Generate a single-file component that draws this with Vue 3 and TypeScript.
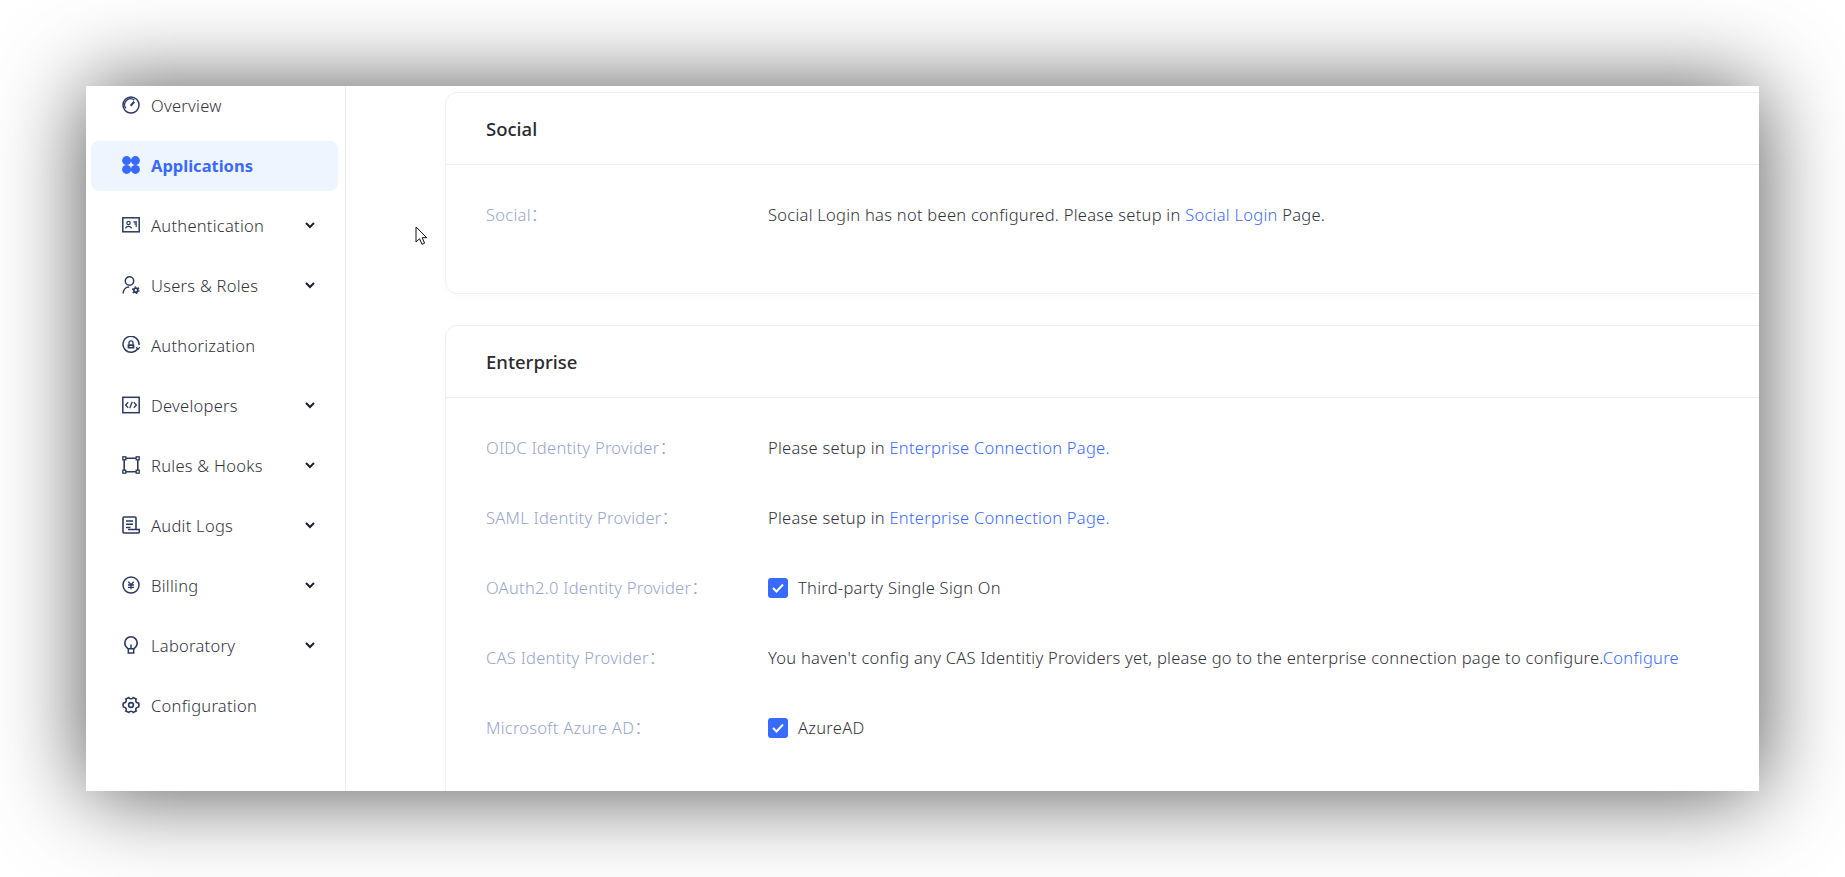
<template>
  <div class="page">
    <div class="window">
      <aside class="sidebar">
        <nav class="nav">
          <div v-for="item in menu" :key="item.label" class="nav-item" :class="{ active: item.active }">
            <svg class="nav-icon" viewBox="0 0 18 18" fill="none" stroke="currentColor" stroke-width="1.5" v-html="item.icon"></svg>
            <span class="nav-label">{{ item.label }}</span>
            <svg v-if="item.sub" class="chevron" viewBox="0 0 10 7" fill="none" stroke="currentColor" stroke-width="2"><path d="M1 1l4 4 4-4" /></svg>
          </div>
        </nav>
      </aside>
      <main class="main">
        <section class="card social">
          <header class="card-title">Social</header>
          <div class="rows">
            <div class="row">
              <span class="label">Social：</span>
              <span class="value">Social Login has not been configured. Please setup in <a class="link">Social Login</a> Page.</span>
            </div>
          </div>
        </section>
        <section class="card enterprise">
          <header class="card-title">Enterprise</header>
          <div class="rows">
            <div v-for="row in enterprise" :key="row.label" class="row">
              <span class="label">{{ row.label }}：</span>
              <span v-if="row.check" class="check">
                <span class="box"><svg viewBox="0 0 20 20" fill="none" stroke="#fff" stroke-width="2"><path d="M5 10l3.500 3.500L15 6.500" /></svg></span>
                <span class="value">{{ row.check }}</span>
              </span>
              <span v-else class="value">{{ row.text }}<a class="link">{{ row.link }}</a></span>
            </div>
          </div>
        </section>
      </main>
      <svg class="cursor" viewBox="0 0 13 20" width="13" height="20"><path d="M1 1v15l3.600-3.300 2.400 5.600 2.600-1.100-2.400-5.500h4.600z" fill="#fff" stroke="#111" stroke-width="1" /></svg>
    </div>
  </div>
</template>

<script setup lang="ts">
interface MenuItem {
  label: string;
  icon: string;
  sub?: boolean;
  active?: boolean;
}

const menu: MenuItem[] = [
  { label: "Overview", icon: '<circle cx="9" cy="9" r="8"/><path d="M3.900 12.300A5.900 5.900 0 0 1 12.300 4.100" stroke-width="1.400"/><path d="M8.600 9.800l3.700-4" stroke-width="2"/>' },
  { label: "Applications", active: true, icon: '<g fill="currentColor" stroke="none"><circle cx="4.600" cy="4.600" r="4.500"/><circle cx="13.400" cy="4.600" r="4.500"/><circle cx="4.600" cy="13.400" r="4.500"/><circle cx="13.400" cy="13.400" r="4.500"/></g>' },
  { label: "Authentication", sub: true, icon: '<rect x=".8" y="1.800" width="16.400" height="14"/><circle cx="6.500" cy="7" r="1.700" stroke-width="1.200"/><path d="M3.600 12.500c.4-2.800 5.400-2.800 5.800 0" stroke-width="1.200"/><path d="M11.500 6h3.500M12.500 8h2.500M13.500 10h1.500" stroke-width="1.300"/>' },
  { label: "Users & Roles", sub: true, icon: '<circle cx="7.500" cy="5" r="4.200"/><path d="M1.200 17.500c0-3.600 2.200-6.500 6-6.500"/><circle cx="13.800" cy="14.200" r="2" stroke-width="1.800"/><circle cx="13.800" cy="14.200" r="3.300" stroke-width="1.100" stroke-dasharray="1.700 1.750"/>' },
  { label: "Authorization", icon: '<path d="M16 12.200A8 8 0 1 1 17 9"/><path d="M14 11.300l2.100 2 1.700-2.300" stroke-width="1.200"/><rect x="5.600" y="8.200" width="6.800" height="4.300" rx=".6" fill="currentColor" stroke="none"/><path d="M7 8.500V6.800a2 2 0 0 1 4 0v1.700" stroke-width="1.300"/><path d="M7.500 10.500h3" stroke="#fff" stroke-width="1"/>' },
  { label: "Developers", sub: true, icon: '<rect x=".8" y="1.300" width="16.400" height="15.400"/><path d="M6.200 6.200L3.600 9l2.600 2.800M11.800 6.200L14.400 9l-2.600 2.800M10.200 5.800l-2.400 6.400" stroke-width="1.300"/>' },
  { label: "Rules & Hooks", sub: true, icon: '<path d="M4 2.200h10M4 15.800h10M2.200 4v10M15.800 4v10" stroke-width="1.600"/><rect x=".8" y=".8" width="3" height="3" stroke-width="1.300"/><rect x="14.200" y=".8" width="3" height="3" stroke-width="1.300"/><rect x=".8" y="14.200" width="3" height="3" stroke-width="1.300"/><rect x="14.200" y="14.200" width="3" height="3" stroke-width="1.300"/>' },
  { label: "Audit Logs", sub: true, icon: '<path d="M14 13.500V2a1 1 0 0 0-1-1H2a1 1 0 0 0-1 1v14a1 1 0 0 0 1 1h14a1.300 1.300 0 0 0 1.300-1.300v-2.200H6" stroke-width="1.600"/><path d="M4 5h7M4 8.300h7M4 11.600h4.500" stroke-width="1.500"/>' },
  { label: "Billing", sub: true, icon: '<circle cx="9" cy="9" r="8"/><path d="M6.300 5.800L9 8.800l2.700-3M6 9h6M6 11.300h6M9 8.800v4.400" stroke-width="1.300"/>' },
  { label: "Laboratory", sub: true, icon: '<path d="M6.300 12.800C4.500 11.600 2.800 10 2.800 7a6.200 6.200 0 0 1 12.400 0c0 3-1.700 4.600-3.500 5.800z" stroke-width="1.600"/><path d="M6.300 12.800v4.200h5.400v-4.200M9 8.500v4.300" stroke-width="1.500"/>' },
  { label: "Configuration", icon: '<path d="M6.800 1.600a2.600 2.600 0 0 0 4.400 0l3 1.400a2.600 2.600 0 0 0 2.400 4 7 7 0 0 1 0 4 2.600 2.600 0 0 0-2.400 4l-3 1.400a2.600 2.600 0 0 0-4.400 0l-3-1.400a2.600 2.600 0 0 0-2.400-4 7 7 0 0 1 0-4 2.600 2.600 0 0 0 2.400-4z" stroke-width="1.600"/><circle cx="9" cy="9" r="2.400" stroke-width="1.600"/>' }
];

const enterprise = [
  { label: "OIDC Identity Provider", text: "Please setup in ", link: "Enterprise Connection Page." },
  { label: "SAML Identity Provider", text: "Please setup in ", link: "Enterprise Connection Page." },
  { label: "OAuth2.0 Identity Provider", check: "Third-party Single Sign On" },
  { label: "CAS Identity Provider", text: "You haven't config any CAS Identitiy Providers yet, please go to the enterprise connection page to configure.", link: "Configure" },
  { label: "Microsoft Azure AD", check: "AzureAD" }
];
</script>

<style>
html,
body {
  margin: 0;
  background: #fff;
  overflow: hidden;
}
</style>

<style scoped>
.page {
  width: 1845px;
  height: 877px;
  padding: 86px;
  box-sizing: border-box;
  font-family: "Noto Sans", "Noto Sans CJK SC", sans-serif;
  font-size: 16.5px;
  font-weight: 300;
  letter-spacing: 0.27px;
  color: #32323c;
}

.window {
  position: relative;
  display: flex;
  width: 1673px;
  height: 705px;
  background: #fff;
  overflow: hidden;
  box-shadow: 0 2px 84px rgba(0, 0, 0, 0.68);
}

.sidebar {
  flex: 0 0 259px;
  border-right: 1px solid #ebedf0;
  overflow: hidden;
}

.nav {
  margin-top: -5px;
  padding: 0 7px 0 5px;
  display: flex;
  flex-direction: column;
  gap: 10px;
}

.nav-item {
  display: flex;
  align-items: center;
  height: 50px;
  padding: 0 23px 0 31px;
  border-radius: 8px;
}

.nav-item.active {
  background: #eff5ff;
  color: #396aff;
  font-weight: 700;
  letter-spacing: 0;
}

.nav-icon {
  width: 18px;
  height: 18px;
  margin-right: 11px;
  color: #2c3a61;
  flex: none;
  position: relative;
  top: -1px;
}

.active .nav-icon {
  color: #396aff;
}

.nav-label {
  flex: 1;
  padding-bottom: 2px;
}

.chevron {
  width: 10px;
  height: 7px;
  color: #1c2030;
  flex: none;
  position: relative;
  top: -1px;
}

.main {
  flex: 1;
  min-width: 0;
  padding: 6px 0 0 99px;
  display: flex;
  flex-direction: column;
  gap: 31px;
}

.card {
  width: 1500px;
  flex: none;
  box-sizing: border-box;
  border: 1px solid #eeeff1;
  border-radius: 12px;
  box-shadow: 0 6px 12px rgba(0, 0, 0, 0.012);
}

.social {
  height: 202px;
}

.enterprise {
  height: 500px;
}

.card-title {
  height: 71px;
  line-height: 72px;
  padding-left: 40px;
  font-size: 18.5px;
  font-weight: 500;
  letter-spacing: 0;
  color: #2a2a30;
  border-bottom: 1px solid #eeeff1;
}

.rows {
  padding: 15px 0 0 40px;
}

.row {
  display: flex;
  align-items: center;
  height: 70px;
}

.label {
  flex: 0 0 282px;
  padding-bottom: 2px;
  color: #97a4cb;
}

.value {
  white-space: nowrap;
  padding-bottom: 2px;
}

.link {
  color: #396aff;
}

.check {
  display: flex;
  align-items: center;
  gap: 10px;
}

.box {
  width: 20px;
  height: 20px;
  border-radius: 3px;
  background: #396aff;
}

.box svg {
  display: block;
}

.cursor {
  position: absolute;
  left: 329px;
  top: 140px;
}
</style>
